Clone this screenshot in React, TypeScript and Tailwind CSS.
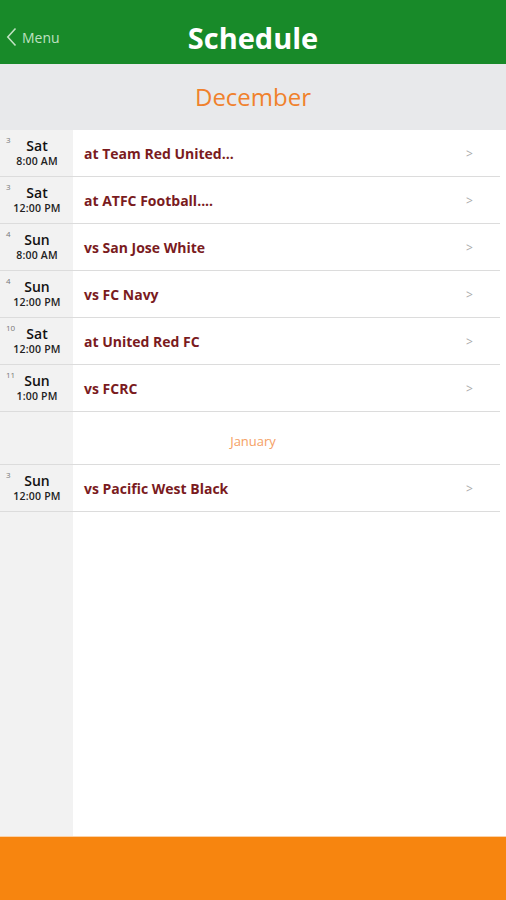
import React from "react";

type Game = {
  day: string;
  weekday: string;
  time: string;
  title: string;
};

const december: Game[] = [
  { day: "3", weekday: "Sat", time: "8:00 AM", title: "at Team Red United..." },
  { day: "3", weekday: "Sat", time: "12:00 PM", title: "at ATFC Football...." },
  { day: "4", weekday: "Sun", time: "8:00 AM", title: "vs San Jose White" },
  { day: "4", weekday: "Sun", time: "12:00 PM", title: "vs FC Navy" },
  { day: "10", weekday: "Sat", time: "12:00 PM", title: "at United Red FC" },
  { day: "11", weekday: "Sun", time: "1:00 PM", title: "vs FCRC" },
];

const january: Game[] = [
  { day: "3", weekday: "Sun", time: "12:00 PM", title: "vs Pacific West Black" },
];

const GameRow = ({ game }: { game: Game }) => (
  <div className="mr-[6px] flex h-[47px] items-center border-b border-[#dcdcdc]">
    <div className="relative flex h-full w-[73px] shrink-0 flex-col items-center justify-center pl-[1px]">
      <span className="absolute left-[6px] top-[6px] text-[8px] leading-none text-[#777]">
        {game.day}
      </span>
      <span className="text-[14px] font-semibold leading-[16px] text-[#111]">
        {game.weekday}
      </span>
      <span className="text-[10.5px] font-semibold leading-[14px] tracking-[0.2px] text-[#222]">
        {game.time}
      </span>
    </div>
    <div className="flex-1 pl-[11px] pt-[1px] text-[14px] font-bold text-[#7a1b1e]">
      {game.title}
    </div>
    <div className="w-[34px] pt-[2px] text-[12px] text-[#aaa]">&gt;</div>
  </div>
);

export default function App() {
  return (
    <div className="flex h-[900px] w-full flex-col bg-white font-['Open_Sans',sans-serif]">
      <header className="flex h-16 shrink-0 items-center bg-[#188a29] pt-[10px]">
        <div className="flex w-[120px] items-center gap-[5px] pl-[6px] text-[14px] text-[#bfe1c1]">
          <svg width="11" height="20" viewBox="0 0 11 20" fill="none">
            <path d="M9.5 1.5 L1.8 10 L9.5 18.5" stroke="#bfe1c1" strokeWidth="1.6" />
          </svg>
          <span>Menu</span>
        </div>
        <h1 className="flex-1 pr-[120px] text-center text-[29px] font-bold leading-none text-white">
          Schedule
        </h1>
      </header>
      <div className="flex h-[66px] shrink-0 items-center justify-center bg-[#e8e9eb] text-[24px] text-[#f0812c]">
        December
      </div>
      <main className="flex-1 bg-[linear-gradient(to_right,#f2f2f2_73px,#ffffff_73px)]">
        {december.map((g, i) => (
          <GameRow key={i} game={g} />
        ))}
        <div className="mr-[6px] flex h-[53px] items-center justify-center border-b border-[#dcdcdc] pl-[6px] pt-[8px] text-[13px] text-[#f5a064]">
          January
        </div>
        {january.map((g, i) => (
          <GameRow key={i} game={g} />
        ))}
      </main>
      <footer className="h-[64px] shrink-0 border-t border-[#fbd2a8] bg-[#f7850f]" />
    </div>
  );
}
